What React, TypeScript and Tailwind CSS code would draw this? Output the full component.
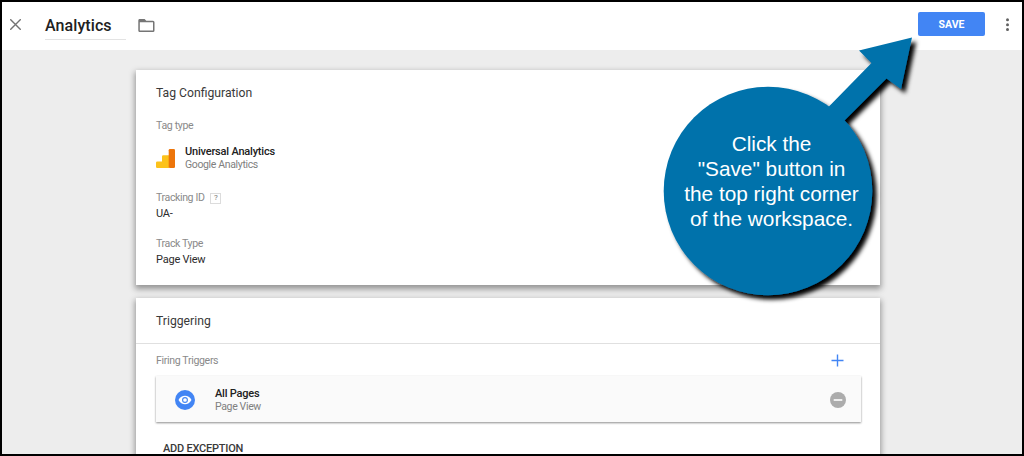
import React from "react";

function Field({ label, value, help }: { label: string; value: string; help?: boolean }) {
  return (
    <div className="flex flex-col">
      <div className="flex h-[14px] items-center text-[10.6px] leading-[14px] tracking-[-0.4px] text-[#8a8a8a]">
        <span>{label}</span>
        {help && (
          <span className="ml-[6px] flex h-[11px] w-[11px] items-center justify-center border border-[#dcdcdc] text-[8px] leading-none tracking-normal text-[#777]">
            ?
          </span>
        )}
      </div>
      <div className="mt-[2px] text-[11px] leading-[14px] tracking-[-0.22px] text-[#2b2b2b]">{value}</div>
    </div>
  );
}

function Header() {
  return (
    <header className="flex h-[48px] shrink-0 items-start bg-white">
      <svg className="ml-[8px] mt-[17px] h-[11px] w-[11px]" viewBox="0 0 11 11" fill="none" stroke="#737373" strokeWidth="1.4">
        <path d="M0.2 0.2L10.8 10.8M10.8 0.2L0.2 10.8" />
      </svg>
      <div className="ml-[24px] mt-[13px] h-[25px] w-[81px] border-b border-[#e3e3e3] text-[16px] font-medium leading-[22px] tracking-[0.08px] text-[#212121]">
        Analytics
      </div>
      <svg className="ml-[12px] mt-[17px] h-[13px] w-[17px]" viewBox="0 0 17 13">
        <path d="M2 0H6.6L8.3 1.7H15A1.5 1.5 0 0 1 16.5 3.2V11.5A1.5 1.5 0 0 1 15 13H2A1.5 1.5 0 0 1 .3 11.5V1.5A1.5 1.5 0 0 1 2 0ZM1.8 3.2V11.6H15V3.2Z" fill="#757575" fillRule="evenodd" />
      </svg>
      <button className="ml-auto mt-[10px] h-[24px] w-[67px] rounded-[2px] bg-[#4285f4] pt-px text-[10.5px] font-bold leading-[24px] text-white">
        SAVE
      </button>
      <svg className="ml-[20px] mr-[12px] mt-[16px] h-[14px] w-[5px]" viewBox="0 0 5 14" fill="#616161">
        <circle cx="2.5" cy="1.8" r="1.5" />
        <circle cx="2.5" cy="6.7" r="1.5" />
        <circle cx="2.5" cy="11.6" r="1.5" />
      </svg>
    </header>
  );
}

function Callout() {
  return (
    <div className="absolute left-[640px] top-[20px] h-[300px] w-[300px]">
      <svg className="h-[300px] w-[300px]" viewBox="640 20 300 300">
        <defs>
          <filter id="shade" x="-10%" y="-10%" width="120%" height="120%">
            <feDropShadow dx="4.2" dy="4.2" stdDeviation="2" floodColor="#000" floodOpacity="1" />
          </filter>
        </defs>
        <g filter="url(#shade)" fill="#0272ab">
          <circle cx="768" cy="191" r="104.3" />
          <path d="M912 37.5L859 50.5L871.5 63L826 109.5L841 124L886.5 78.5L901 89Z" />
        </g>
      </svg>
      <p className="absolute left-[31.5px] top-[111px] w-[200px] text-center font-['Liberation_Sans',Arial,sans-serif] text-[20.8px] leading-[25px] text-white">
        Click the
        <br />
        "Save" button in
        <br />
        the top right corner
        <br />
        of the workspace.
      </p>
    </div>
  );
}

export default function App() {
  return (
    <div className="relative flex h-[456px] w-[1024px] flex-col overflow-hidden border-2 border-black bg-[#ededed] font-[Roboto,sans-serif]">
      <Header />
      <main className="flex flex-col pl-[134px] pt-[20px]">
        <section className="flex h-[215px] w-[744px] shrink-0 flex-col bg-white pl-[20px] pt-[15px] shadow-[0_3px_6px_1px_rgba(0,0,0,0.38)]">
          <h2 className="text-[12.2px] leading-[16px] text-[#3a3a3a]">Tag Configuration</h2>
          <div className="mt-[18px] text-[10.6px] leading-[14px] tracking-[-0.35px] text-[#8a8a8a]">Tag type</div>
          <div className="mt-[12px] flex h-[27px]">
            <svg className="mt-[4px] h-[19px] w-[19px]" viewBox="0 0 19 19">
              <path d="M1.3 12.5H6V7.6A1.3 1.3 0 0 1 7.3 6.3H13V19H1.3A1.3 1.3 0 0 1 0 17.7V13.8A1.3 1.3 0 0 1 1.3 12.5Z" fill="#fcc21b" />
              <rect x="12.7" width="6.3" height="19" rx="1.3" fill="#ed750a" />
            </svg>
            <div className="ml-[10px] leading-[13px]">
              <div className="text-[11px] font-medium leading-[13px] tracking-[-0.2px] text-[#212121]">Universal Analytics</div>
              <div className="text-[10.5px] leading-[13px] tracking-[-0.35px] text-[#808080]">Google Analytics</div>
            </div>
          </div>
          <div className="mt-[19px]">
            <Field label="Tracking ID" value="UA-" help />
          </div>
          <div className="mt-[16px]">
            <Field label="Track Type" value="Page View" />
          </div>
        </section>

        <section className="mt-[13px] flex h-[200px] w-[744px] shrink-0 flex-col bg-white shadow-[0_3px_6px_1px_rgba(0,0,0,0.38)]">
          <h2 className="flex h-[46px] items-center border-b border-[#e0e0e0] pl-[20px] pt-[2px] text-[12.2px] text-[#3a3a3a]">
            Triggering
          </h2>
          <div className="flex h-[32px] items-center justify-between pl-[20px] pr-[36px] pt-[2px]">
            <span className="text-[10.6px] tracking-[-0.35px] text-[#8a8a8a]">Firing Triggers</span>
            <svg className="mb-[2px] h-[13px] w-[13px]" viewBox="0 0 13 13" stroke="#4285f4" strokeWidth="1.4">
              <path d="M6.5 0.5V12.5M0.5 6.5H12.5" />
            </svg>
          </div>
          <div className="ml-[20px] flex h-[46px] w-[705px] items-center bg-[#fafafa] pl-[19px] pr-[15px] pt-px shadow-[0_1px_2px_rgba(0,0,0,0.45)]">
            <svg className="h-[20px] w-[20px]" viewBox="0 0 20 20">
              <circle cx="10" cy="10" r="10" fill="#4285f4" />
              <path d="M3.5 10C5 7.2 7.3 5.8 10 5.8S15 7.2 16.5 10C15 12.8 12.7 14.2 10 14.2S5 12.8 3.5 10Z" fill="#fff" />
              <circle cx="10" cy="10" r="2.4" fill="#fff" stroke="#4285f4" strokeWidth="1.1" />
            </svg>
            <div className="ml-[20px] leading-[13px]">
              <div className="text-[11px] font-medium leading-[13px] tracking-[-0.22px] text-[#212121]">All Pages</div>
              <div className="text-[10.5px] leading-[13px] tracking-[-0.35px] text-[#808080]">Page View</div>
            </div>
            <svg className="ml-auto h-[16px] w-[16px]" viewBox="0 0 16 16">
              <circle cx="8" cy="8" r="8" fill="#acacac" />
              <path d="M3.7 8H12.3" stroke="#fff" strokeWidth="1.6" />
            </svg>
          </div>
          <div className="ml-[27px] mt-[20px] text-[11px] font-medium leading-[14px] tracking-[-0.22px] text-[#3a3a3a]">ADD EXCEPTION</div>
        </section>
      </main>
      <div className="absolute -left-[2px] -top-[2px]">
        <Callout />
      </div>
    </div>
  );
}
